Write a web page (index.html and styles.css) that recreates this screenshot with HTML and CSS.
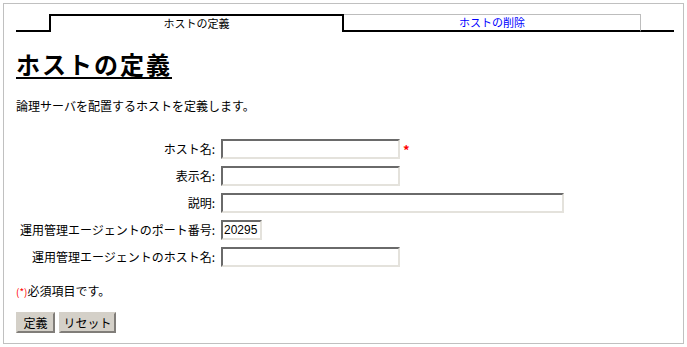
FILE: index.html
```html
<!doctype html>
<html lang="ja">

<head>
    <meta charset="utf-8">
    <title>ホストの定義</title>
    <link rel="stylesheet" href="styles.css">
</head>

<body>
    <div class="frame">
        <div class="tabs">
            <div class="tab-edge"></div>
            <div class="tab active">ホストの定義</div>
            <div class="tab"><a href="#">ホストの削除</a></div>
            <div class="tab-rest"></div>
        </div>

        <h1 class="title">ホストの定義</h1>
        <p class="lead">論理サーバを配置するホストを定義します。</p>

        <form class="form">
            <div class="fields">
                <label class="label">ホスト名:</label>
                <div class="field"><input class="text" type="text"><span class="req">*</span></div>

                <label class="label">表示名:</label>
                <div class="field"><input class="text" type="text"></div>

                <label class="label">説明:</label>
                <div class="field"><input class="text wide" type="text"></div>

                <label class="label">運用管理エージェントのポート番号:</label>
                <div class="field"><input class="text port" type="text" value="20295"></div>

                <label class="label">運用管理エージェントのホスト名:</label>
                <div class="field"><input class="text" type="text"></div>
            </div>

            <p class="note"><span class="req-mark">(*)</span>必須項目です。</p>

            <div class="buttons">
                <button type="submit" class="btn define">定義</button>
                <button type="reset" class="btn reset">リセット</button>
            </div>
        </form>
    </div>
</body>

</html>
```

FILE: styles.css
```css
body {
    margin: 0;
    background-color: #ffffff;
    color: #000000;
    font-family: "Noto Sans CJK JP", "Liberation Sans", sans-serif;
    font-size: 12px;
}

.frame {
    margin: 3px;
    width: 681px;
    height: 341px;
    border: 1px solid #c0c0c0;
    padding: 10px 0 0 12px;
    box-sizing: border-box;
}

/* tab strip */
.tabs {
    display: flex;
    width: 658px;
    height: 18px;
}

.tab-edge {
    width: 33px;
    border-bottom: 2px solid #000000;
}

.tab {
    width: 296px;
    font-size: 11px;
    line-height: 15px;
    text-align: center;
    border-top: 1px solid #bdbdbd;
    border-right: 1px solid #bdbdbd;
    border-bottom: 2px solid #000000;
}

.tab.active {
    width: 291px;
    border: 2px solid #000000;
    border-bottom: none;
}

.tab a {
    color: #0000ff;
    text-decoration: none;
}

.tab-rest {
    flex: 1;
    border-bottom: 2px solid #000000;
}

.title {
    margin: 17px 0 0 0;
    font-size: 24px;
    line-height: 30px;
    letter-spacing: 2px;
    text-decoration: underline;
    text-decoration-thickness: 2px;
    text-underline-offset: 3px;
}

.lead {
    margin: 18px 0 0 0;
    line-height: 18px;
}

/* form rows */
.fields {
    display: grid;
    grid-template-columns: 199px auto;
    column-gap: 6px;
    row-gap: 7px;
    margin-top: 24px;
}

.label {
    text-align: right;
    line-height: 20px;
}

.field {
    display: flex;
    align-items: center;
}

.text {
    width: 179px;
    height: 20px;
    box-sizing: border-box;
    border: 2px solid #e4e2dc;
    border-top-color: #6a6a6a;
    border-left-color: #6a6a6a;
    padding: 0 1px;
    font-family: "Liberation Sans", sans-serif;
    font-size: 12px;
}

.text.wide {
    width: 343px;
}

.text.port {
    width: 41px;
}

.req {
    color: #ff0000;
    margin-left: 3px;
    font-size: 13px;
    font-weight: bold;
}

.note {
    margin: 15px 0 0 0;
    line-height: 18px;
}

.req-mark {
    color: #ff0000;
    font-size: 10px;
}

.buttons {
    display: flex;
    gap: 4px;
    margin-top: 11px;
}

.btn {
    height: 21px;
    padding: 0;
    background-color: #d4d0c8;
    border: 2px outset #d4d0c8;
    font-family: "Noto Sans CJK JP", sans-serif;
    font-size: 12px;
    line-height: 15px;
}

.btn.define {
    width: 39px;
}

.btn.reset {
    width: 57px;
}
```
